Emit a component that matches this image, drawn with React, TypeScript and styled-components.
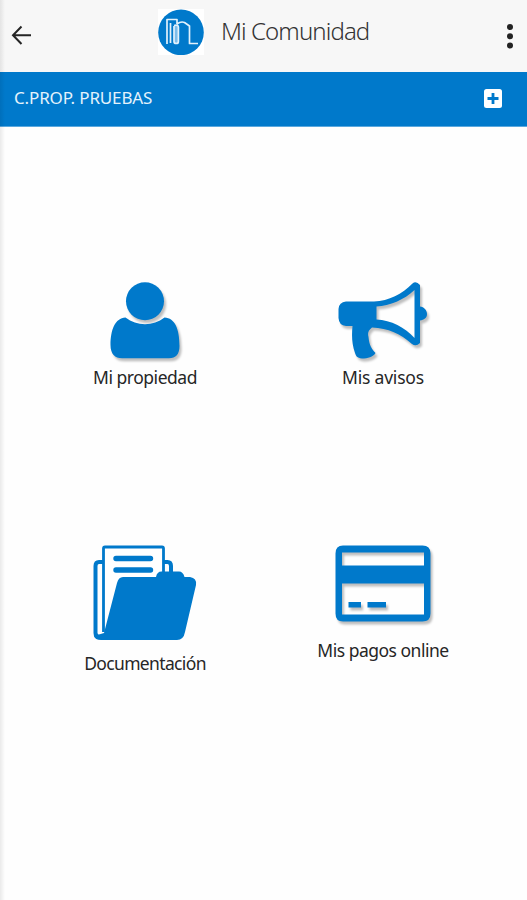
import React from "react";
import styled, { createGlobalStyle } from "styled-components";

const BLUE = "#0079cb";

const GlobalStyle = createGlobalStyle`
  * { box-sizing: border-box; }
  body { margin: 0; background: #fefefe; font-family: "Noto Sans", "Open Sans", sans-serif; }
  button { border: 0; padding: 0; background: none; font: inherit; color: inherit; }
  svg { display: block; }
`;

const Screen = styled.div`
  position: relative;
  width: 527px;
  height: 900px;
  overflow: hidden;
  background: #fefefe;
`;

const EdgeShadow = styled.div`
  position: absolute;
  inset: 0 auto 0 0;
  width: 5px;
  background: linear-gradient(90deg, rgba(0, 0, 0, 0.08), rgba(0, 0, 0, 0));
`;

const Header = styled.header`
  display: flex;
  align-items: flex-start;
  height: 72px;
  padding: 9px 12px 0 11px;
  background: #f7f7f7;
`;

const BackButton = styled.button`
  margin-top: 16px;
`;

const Brand = styled.div`
  display: flex;
  margin-left: 126px;
  flex: 1;
`;

const Title = styled.h1`
  margin: 5px 0 0 17px;
  font-size: 24px;
  line-height: 34px;
  font-weight: 300;
  white-space: nowrap;
  letter-spacing: -0.9px;
  color: #333;
`;

const MenuButton = styled.button`
  margin-top: 14px;
`;

const CommunityBar = styled.section`
  display: flex;
  justify-content: space-between;
  height: 55px;
  padding: 16px 25px 0 14px;
  background: ${BLUE};
  border-bottom: 1px solid #5aa8de;
  color: #e4f2fc;
`;

const CommunityName = styled.span`
  font-size: 17px;
  line-height: 20px;
  letter-spacing: -0.15px;
  white-space: nowrap;
`;

const AddButton = styled.button`
  align-self: flex-start;
  margin-top: 1px;
`;

const Tiles = styled.main`
  display: grid;
  grid-template-columns: 238px 238px;
  grid-template-rows: 264px 240px;
  padding: 154px 25px 0 26px;
`;

const Tile = styled.a`
  display: flex;
  flex-direction: column;
  align-items: center;
`;

const Shadowed = styled.svg`
  overflow: visible;
  filter: drop-shadow(2.5px 3px 1px rgba(0, 0, 0, 0.25));
`;

const Label = styled.span<{ $gap: number; $tracking: number }>`
  margin-top: ${(p) => p.$gap}px;
  font-size: 17.5px;
  line-height: 24px;
  letter-spacing: ${(p) => p.$tracking}px;
  white-space: nowrap;
  color: #262626;
`;

const Logo = () => (
  <svg width="46" height="46" viewBox="158 9 46 46" fill="none">
    <path fill="#fff" d="M158 9h46v46h-46z" />
    <circle cx="181" cy="32.4" r="22.8" fill={BLUE} />
    <path fill="#7dbdea" d="M174 26h4.500v17.500H174z" />
    <path
      stroke="#e1f1fc"
      strokeWidth="1.7"
      strokeLinejoin="round"
      d="M167 44V19.500H177V24M170.500 43V23M174 26v15.500q0 2 2.200 2t2.200-2V27q0-2.500-4.400-1.500M177 24q4-3 7.500-1.500L189.500 26v17.500h8.500"
    />
  </svg>
);

const UserIcon = () => (
  <Shadowed width="72" height="78" viewBox="109 281 72 78" fill={BLUE}>
    <circle cx="145" cy="301.300" r="19" />
    <path d="M125.500 317.500C115 318 110.500 330 110.500 345C110.500 354 115 358.300 122 358.300H169C176 358.300 179.500 354 179.500 346C179.500 329 175 318 164.500 317.500C153 326.500 137 326.500 125.500 317.500Z" />
  </Shadowed>
);

const MegaphoneIcon = () => (
  <Shadowed width="92" height="78" viewBox="337 281 92 78" fill={BLUE}>
    <path
      fillRule="evenodd"
      d="M346 301.500H374C389 301 402 294 412.500 283.500Q416 280.500 420 285V306.500C424 307 427 310 427 314C427 318 424 320 420 320.500V343Q416 347 412 344C401 334 388 328 372 327.500C368 331 367.500 333 368.500 337C369 342 370 348 375.500 353C373 357 368 358.500 362 358.500C357 358 356 356 355 353C352 344 351.500 337 352.500 326H346Q339 325.500 338.500 318V309Q339 302 346 301.500ZM376.500 306.500V319.500C391 320 405 327.500 414.500 338V290C404 300 390 305.500 376.500 306.500Z"
    />
  </Shadowed>
);

const FolderIcon = () => (
  <svg width="104" height="96" viewBox="93 546 104 96" fill="none">
    <path
      stroke={BLUE}
      strokeWidth="4"
      strokeLinejoin="round"
      d="M103 563H99Q95.500 563 95.500 567V634Q95.500 638 100 638H104M164 563H167.500Q171 563 171 567V573"
    />
    <path
      fill="#fff"
      stroke={BLUE}
      strokeWidth="2.800"
      strokeLinejoin="round"
      d="M103.500 633V549.500Q103.500 548 105 548H162Q163.500 548 163.500 549.500V580"
    />
    <path stroke={BLUE} strokeWidth="5.400" strokeLinecap="round" d="M116 559.500H150.500M116 571H150.500" />
    <path
      fill={BLUE}
      d="M123 578H156Q157 572.500 161.500 572.500H179Q183 572.500 184.500 578H190Q197 579 196 586L185 633Q183.500 641 177 641H101Q95 641 94 637L104 634L117 584Q118.500 578 123 578Z"
    />
  </svg>
);

const CardIcon = () => (
  <Shadowed width="97" height="78" viewBox="335 546 97 78" fill={BLUE}>
    <path
      fillRule="evenodd"
      d="M343 546.500H422.500Q430.500 546.500 430.500 554.500V614.500Q430.500 622.500 422.500 622.500H343Q335.500 622.500 335.500 614.500V554.500Q335.500 546.500 343 546.500ZM342 553.500V566.500H424V553.500ZM342 584.500V615.500H424V584.500Z"
    />
    <path d="M348.500 603H361V608.500H348.500ZM367.500 603H386V608.500H367.500Z" />
  </Shadowed>
);

const tiles = [
  { label: "Mi propiedad", Icon: UserIcon, gap: 6, tracking: -0.48 },
  { label: "Mis avisos", Icon: MegaphoneIcon, gap: 6, tracking: -0.2 },
  { label: "Documentación", Icon: FolderIcon, gap: 10, tracking: -0.65 },
  { label: "Mis pagos online", Icon: CardIcon, gap: 15, tracking: -0.5 },
];

export default function App() {
  return (
    <>
      <GlobalStyle />
      <Screen>
        <Header>
          <BackButton aria-label="Volver">
            <svg width="21" height="21" viewBox="0 0 21 21" fill="none" stroke="#252525" strokeWidth="2">
              <path d="M10.500 1.500L2 10.200L10.500 19M2 10.200H20" />
            </svg>
          </BackButton>
          <Brand>
            <Logo />
            <Title>Mi Comunidad</Title>
          </Brand>
          <MenuButton aria-label="Menú">
            <svg width="10" height="28" viewBox="0 0 10 28" fill="#222">
              <circle cx="5" cy="4" r="3" />
              <circle cx="5" cy="13.300" r="3" />
              <circle cx="5" cy="22.600" r="3" />
            </svg>
          </MenuButton>
        </Header>
        <CommunityBar>
          <CommunityName>C.PROP. PRUEBAS</CommunityName>
          <AddButton aria-label="Añadir">
            <svg width="18" height="19" viewBox="0 0 18 19">
              <rect width="18" height="19" rx="2.500" fill="#fff" />
              <path d="M9 4v11M3.500 9.500h11" stroke={BLUE} strokeWidth="2.800" />
            </svg>
          </AddButton>
        </CommunityBar>
        <Tiles>
          {tiles.map(({ label, Icon, gap, tracking }) => (
            <Tile key={label}>
              <Icon />
              <Label $gap={gap} $tracking={tracking}>{label}</Label>
            </Tile>
          ))}
        </Tiles>
        <EdgeShadow />
      </Screen>
    </>
  );
}
